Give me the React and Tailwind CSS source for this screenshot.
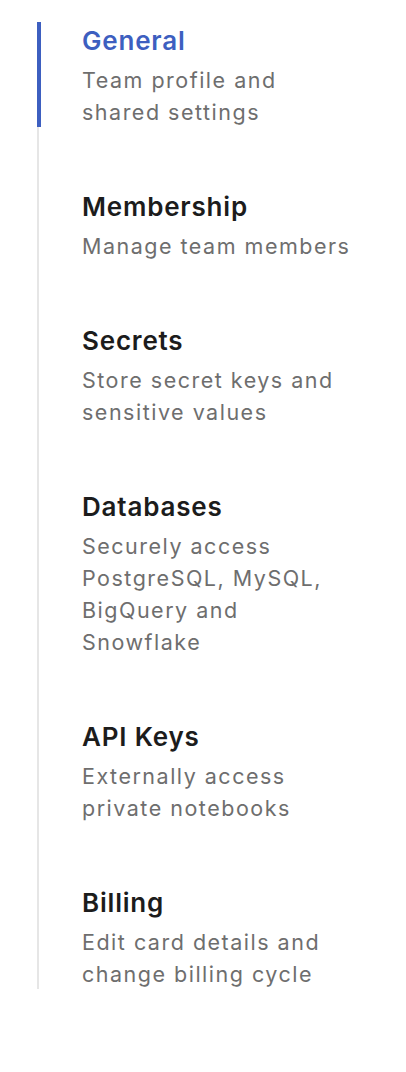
export default function App() {
  const items = [
    { title: "General", desc: ["Team profile and", "shared settings"], active: true },
    { title: "Membership", desc: ["Manage team members"] },
    { title: "Secrets", desc: ["Store secret keys and", "sensitive values"] },
    { title: "Databases", desc: ["Securely access", "PostgreSQL, MySQL,", "BigQuery and", "Snowflake"] },
    { title: "API Keys", desc: ["Externally access", "private notebooks"] },
    { title: "Billing", desc: ["Edit card details and", "change billing cycle"] },
  ];
  return (
    <div className="w-[406px] h-[1072px] bg-white pt-[22px] pl-[37px]" style={{ fontFamily: "Inter, 'Noto Sans', sans-serif" }}>
      <nav className="flex flex-col gap-[61px] border-l-2 border-[#e6e6e6]">
        {items.map((it) => (
          <a key={it.title} className="relative block pl-[43px]">
            {it.active && <span className="absolute left-[-2px] top-0 bottom-0 w-[4px] bg-[#3d5fc0]" />}
            <div className={`mb-[3px] text-[26px] leading-[38px] font-semibold tracking-[0.8px] ${it.active ? "text-[#3d5fc0]" : "text-[#1c1c1c]"}`}>{it.title}</div>
            <div className="pt-[1px] mb-[-1px] text-[21.5px] leading-[32px] text-[#6e6e6e] tracking-[1.5px]">
              {it.desc.map((d) => (
                <div key={d} className="whitespace-nowrap">{d}</div>
              ))}
            </div>
          </a>
        ))}
      </nav>
    </div>
  );
}
